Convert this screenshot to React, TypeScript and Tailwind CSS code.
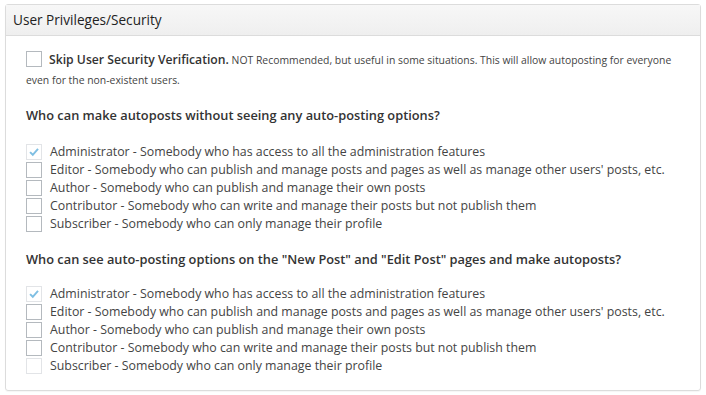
const roles = [
  { name: 'Administrator', desc: 'Somebody who has access to all the administration features' },
  { name: 'Editor', desc: "Somebody who can publish and manage posts and pages as well as manage other users' posts, etc." },
  { name: 'Author', desc: 'Somebody who can publish and manage their own posts' },
  { name: 'Contributor', desc: 'Somebody who can write and manage their posts but not publish them' },
  { name: 'Subscriber', desc: 'Somebody who can only manage their profile' },
]

function Box({ checked, faded, className = '' }: { checked?: boolean; faded?: boolean; className?: string }) {
  return (
    <span
      className={
        'flex size-4 shrink-0 items-center justify-center border bg-white ' +
        (checked || faded ? 'border-[#e2e4e7] ' : 'border-[#b4b9be] ') +
        className
      }
    >
      {checked && (
        <svg viewBox="0 0 16 16" className="size-4">
          <path d="M3.5 8.2 6.6 11.2 12.6 4.3" fill="none" stroke="#7fbfe3" strokeWidth="2.2" />
        </svg>
      )}
    </span>
  )
}

function RoleList({ lastFaded }: { lastFaded?: boolean }) {
  return (
    <div className="flex flex-col gap-[2px]">
      {roles.map((r, i) => (
        <div key={r.name} className="flex h-4 items-center gap-2">
          <Box checked={i === 0} faded={lastFaded && i === roles.length - 1} />
          <span className="text-[12.35px] leading-4 whitespace-nowrap text-[#444]">
            {r.name} - {r.desc}
          </span>
        </div>
      ))}
    </div>
  )
}

export default function App() {
  return (
    <div className="h-[395px] w-[706px] bg-white px-[5px] pt-[4px] font-['Open_Sans',sans-serif] text-[#333]">
      <div className="w-[696px] rounded-[3px] border border-[#dcdcdc] shadow-[0_1px_1px_rgba(0,0,0,0.04)]">
        <div className="flex h-[31px] items-center border-b border-[#dcdcdc] bg-gradient-to-b from-[#f7f7f7] to-[#efefef] px-[7px] text-[13.6px] text-[#222]">
          User Privileges/Security
        </div>
        <div className="px-5 pt-[14px] pb-[16px]">
          <p className="text-[10.4px] leading-[20px] whitespace-nowrap text-[#444]">
            <Box className="mr-[7px] inline-flex align-[-3px]" />
            <span className="text-[12.2px] font-semibold text-[#333]">Skip User Security Verification.</span>{' '}
            NOT Recommended, but useful in some situations. This will allow autoposting for everyone
            <br />
            even for the non-existent users.
          </p>

          <div className="mt-[16px] text-[12.8px] leading-[18px] font-semibold text-[#333]">
            Who can make autoposts without seeing any auto-posting options?
          </div>
          <div className="mt-[20px]">
            <RoleList />
          </div>

          <div className="mt-[18px] text-[12.8px] leading-[18px] font-semibold text-[#333]">
            Who can see auto-posting options on the "New Post" and "Edit Post" pages and make autoposts?
          </div>
          <div className="mt-[18px]">
            <RoleList lastFaded />
          </div>
        </div>
      </div>
    </div>
  )
}
